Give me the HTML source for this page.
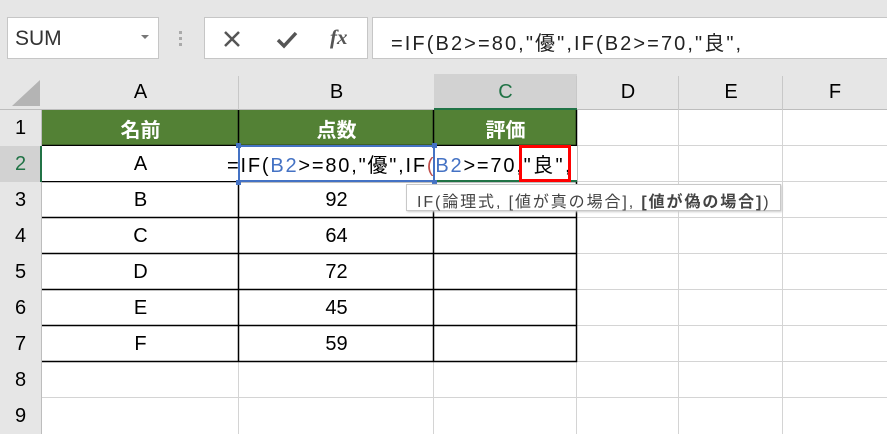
<!DOCTYPE html>
<html><head><meta charset="utf-8"><style>
*{margin:0;padding:0;box-sizing:border-box}
body{width:887px;height:434px;overflow:hidden;background:#fff;position:relative;font-family:"Liberation Sans","Noto Sans CJK JP",sans-serif;}
.a{position:absolute}
.c{position:absolute;display:flex;align-items:center;justify-content:center;font-size:20px;color:#000}
</style></head><body>
<div class="a" style="left:0;top:0;width:887px;height:74px;background:#e6e6e6"></div>
<div class="a" style="top:17px;left:7px;width:152px;height:42px;background:#fff;border:1px solid #c6c6c6"></div>
<div class="a" style="left:15px;top:27px;font-size:21px;color:#333">SUM</div>
<div class="a" style="left:141px;top:35px;width:0;height:0;border-left:4px solid transparent;border-right:4px solid transparent;border-top:4px solid #777"></div>
<div class="a" style="left:179px;top:31px;width:3px;height:3px;background:#aaa;box-shadow:0 6px #aaa,0 12px #aaa"></div>
<div class="a" style="left:204px;top:17px;width:164px;height:42px;background:#fff;border:1px solid #c6c6c6"></div>
<svg class="a" style="left:222px;top:29px" width="20" height="20"><path d="M3 3L17 17M17 3L3 17" stroke="#555" stroke-width="2.5"/></svg>
<svg class="a" style="left:276px;top:29px" width="22" height="20"><path d="M2 11L8 17L20 4" stroke="#555" stroke-width="3.5" fill="none"/></svg>
<div class="a" style="left:330px;top:25px;font-family:'Liberation Serif',serif;font-style:italic;font-weight:bold;font-size:21px;color:#555">fx</div>
<div class="a" style="left:372px;top:17px;width:520px;height:42px;background:#fff;border:1px solid #c6c6c6"></div>
<div class="a" style="left:391px;top:27px;font-size:20px;color:#222;white-space:nowrap;letter-spacing:2.1px">=IF(B2&gt;=80,"優",IF(B2&gt;=70,"良",</div>
<div class="a" style="left:0;top:74px;width:887px;height:36px;background:#e6e6e6;border-bottom:1px solid #bdbdbd"></div>
<svg class="a" style="left:10px;top:78px" width="32" height="30"><path d="M30 2L30 28L2 28Z" fill="#b4b4b4"/></svg>
<div class="a" style="left:434px;top:74px;width:143px;height:36px;background:#d2d2d2;border-bottom:2px solid #217346"></div>
<div class="c" style="left:42px;top:74px;width:197px;height:36px">A</div>
<div class="c" style="left:239px;top:74px;width:195px;height:36px">B</div>
<div class="c" style="left:434px;top:74px;width:143px;height:36px;color:#217346">C</div>
<div class="c" style="left:577px;top:74px;width:102px;height:36px">D</div>
<div class="c" style="left:679px;top:74px;width:104px;height:36px">E</div>
<div class="c" style="left:783px;top:74px;width:104px;height:36px">F</div>
<div class="a" style="left:238px;top:76px;width:1px;height:34px;background:#c8c8c8"></div>
<div class="a" style="left:576px;top:76px;width:1px;height:34px;background:#c8c8c8"></div>
<div class="a" style="left:678px;top:76px;width:1px;height:34px;background:#c8c8c8"></div>
<div class="a" style="left:782px;top:76px;width:1px;height:34px;background:#c8c8c8"></div>
<div class="a" style="left:0;top:110px;width:42px;height:324px;background:#e6e6e6;border-right:1px solid #bdbdbd"></div>
<div class="a" style="left:0;top:146px;width:42px;height:36px;background:#d2d2d2;border-right:2px solid #217346"></div>
<div class="c" style="left:0;top:110px;width:41px;height:36px">1</div>
<div class="c" style="left:0;top:146px;width:41px;height:36px;color:#217346">2</div>
<div class="c" style="left:0;top:182px;width:41px;height:36px">3</div>
<div class="c" style="left:0;top:218px;width:41px;height:36px">4</div>
<div class="c" style="left:0;top:254px;width:41px;height:36px">5</div>
<div class="c" style="left:0;top:290px;width:41px;height:36px">6</div>
<div class="c" style="left:0;top:326px;width:41px;height:36px">7</div>
<div class="c" style="left:0;top:362px;width:41px;height:36px">8</div>
<div class="c" style="left:0;top:398px;width:41px;height:36px">9</div>
<svg class="a" style="left:42px;top:110px" width="845" height="324">
<g stroke="#d4d4d4" stroke-width="1">
<path d="M0 35.5H845M0 71.5H845M0 107.5H845M0 143.5H845M0 179.5H845M0 215.5H845M0 251.5H845M0 287.5H845"/>
<path d="M534.5 0V324M636.5 0V324M740.5 0V324M196.5 0V324M391.5 0V324"/>
</g>
<rect x="0" y="0" width="534" height="36" fill="#538135"/>
<g stroke="#000" stroke-width="1.5" fill="none">
<path d="M0 251.5H534.5V0M196.5 0V251.5M391.5 0V251.5M0 35.5H534.5M0 71.5H534.5M0 107.5H534.5M0 143.5H534.5M0 179.5H534.5M0 215.5H534.5"/>
</g>
</svg>
<div class="a" style="left:42px;top:146px;width:535px;height:35px;background:#fff"></div>
<div class="a" style="left:434px;top:108px;width:143px;height:2px;background:#217346"></div>
<div class="a" style="left:434px;top:180px;width:143px;height:2px;background:#217346"></div>
<div class="c" style="left:42px;top:110px;width:197px;height:36px;color:#fff;font-weight:bold">名前</div>
<div class="c" style="left:239px;top:110px;width:195px;height:36px;color:#fff;font-weight:bold">点数</div>
<div class="c" style="left:434px;top:110px;width:143px;height:36px;color:#fff;font-weight:bold">評価</div>
<div class="c" style="left:42px;top:146px;width:197px;height:36px">A</div>
<div class="c" style="left:42px;top:182px;width:197px;height:36px">B</div>
<div class="c" style="left:42px;top:218px;width:197px;height:36px">C</div>
<div class="c" style="left:42px;top:254px;width:197px;height:36px">D</div>
<div class="c" style="left:42px;top:290px;width:197px;height:36px">E</div>
<div class="c" style="left:42px;top:326px;width:197px;height:36px">F</div>
<div class="c" style="left:239px;top:182px;width:195px;height:36px">92</div>
<div class="c" style="left:239px;top:218px;width:195px;height:36px">64</div>
<div class="c" style="left:239px;top:254px;width:195px;height:36px">72</div>
<div class="c" style="left:239px;top:290px;width:195px;height:36px">45</div>
<div class="c" style="left:239px;top:326px;width:195px;height:36px">59</div>
<div class="a" style="left:238px;top:145px;width:197px;height:37px;border:2px solid #4472c4"></div>
<div class="a" style="left:236px;top:143px;width:5px;height:5px;background:#4472c4"></div>
<div class="a" style="left:432px;top:143px;width:5px;height:5px;background:#4472c4"></div>
<div class="a" style="left:236px;top:180px;width:5px;height:5px;background:#4472c4"></div>
<div class="a" style="left:432px;top:180px;width:5px;height:5px;background:#4472c4"></div>
<div class="a" style="left:227px;top:149px;font-size:20px;white-space:nowrap;color:#000;letter-spacing:1.8px">=IF(<span style="color:#4472c4">B2</span>&gt;=80,"優",IF<span style="color:#c0504d">(</span><span style="color:#4472c4">B2</span>&gt;=70,<span style="letter-spacing:2.4px">"良",</span></div>
<div class="a" style="left:519px;top:145px;width:52px;height:37px;border:3px solid #f00"></div>
<div class="a" style="left:406px;top:184px;width:375px;height:27px;background:#fff;border:1px solid #c8c8c8;box-shadow:1px 1px 2px #ccc;font-size:16px;color:#444;padding:3px 0 0 10px;white-space:nowrap;letter-spacing:1.9px">IF(論理式, [値が真の場合], <b>[値が偽の場合]</b>)</div>
</body></html>
